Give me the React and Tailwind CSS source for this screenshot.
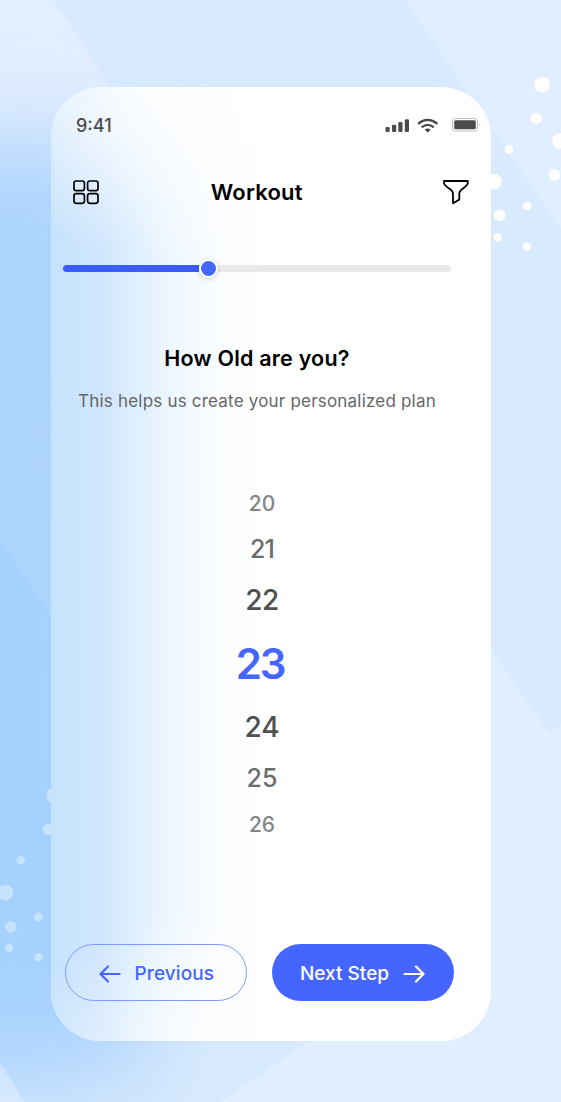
const numbers = [
  { n: 20, box: "h-[42px]", cls: "text-[21px] text-[#858585] font-medium" },
  { n: 21, box: "h-[50px]", cls: "text-[25px] text-[#6c6c6c] font-medium tracking-[-0.04em]" },
  { n: 22, box: "h-[51px]", cls: "text-[28px] text-[#505050] font-medium tracking-[-0.02em]" },
  { n: 23, box: "h-[77px]", cls: "mr-[4px] text-[42px] text-[#4466ff] font-semibold tracking-[-0.05em]" },
  { n: 24, box: "h-[49px]", cls: "text-[28px] text-[#505050] font-medium" },
  { n: 25, box: "h-[54px]", cls: "text-[25px] text-[#6c6c6c] font-medium" },
  { n: 26, box: "h-[38px]", cls: "text-[21px] text-[#858585] font-medium" },
];

const whiteDots = [
  [542, 84.5, 7.8], [536.5, 118.5, 5.7], [560, 141, 7.8], [509, 149.5, 4.3], [554.5, 175, 5.7],
  [494, 181.5, 7.8], [527, 206, 4.3], [499.5, 215.5, 5.7], [497.5, 237.3, 4.3], [527, 246.5, 4.3],
];
const blueDots = [
  [54, 795.5, 7.8], [48.5, 829.5, 5.7], [20.7, 860.3, 4.3], [5.5, 892.5, 7.8],
  [38.5, 917, 4.3], [11, 926.7, 5.7], [9, 948, 4.3], [38.5, 957.3, 4.3],
];

function Backdrop() {
  return (
    <svg className="absolute inset-0" width="561" height="1102" viewBox="0 0 561 1102">
      <defs>
        <filter id="soft" x="-100%" y="-30%" width="300%" height="160%" colorInterpolationFilters="sRGB">
          <feGaussianBlur stdDeviation="44" />
        </filter>
        <linearGradient id="lower" gradientUnits="userSpaceOnUse" x1="0" y1="960" x2="0" y2="1040">
          <stop offset="0" stopColor="#a2d0fe" stopOpacity=".75" />
          <stop offset="1" stopColor="#a2d0fe" stopOpacity="0" />
        </linearGradient>
      </defs>
      <rect width="561" height="1102" fill="#d8eafe" />
      <path d="M405 0H561V230Z" fill="#e1eeff" />
      <path d="M450 590L549 733L561 725V1102H220L450 946Z" fill="#e1eeff" />
      <path d="M0 0H53L111 87L180 190H0Z" fill="#e3eefe" />
      <path d="M-180 140H120L150 1075H-180Z" fill="#add4fd" filter="url(#soft)" />
      <rect x="-180" y="960" width="260" height="130" fill="#a9d3fd" opacity=".5" filter="url(#soft)" />
      <path d="M0 1063L25 1102H0Z" fill="#f0f4ff" opacity=".4" />
      <path d="M0 540L50 615L100 690V1040H0Z" fill="url(#lower)" />
      {blueDots.map(([x, y, r]) => <circle key={y} cx={x} cy={y} r={r} fill="#c6e2fd" />)}
      {whiteDots.map(([x, y, r]) => <circle key={y} cx={x} cy={y} r={r} fill="#fff" />)}
    </svg>
  );
}

function CardGlow() {
  return (
    <svg className="absolute inset-0" width="441" height="954" viewBox="0 0 441 954">
      <defs>
        <linearGradient id="glow">
          <stop offset="0" stopColor="#c5e3fc" />
          <stop offset=".22" stopColor="#cfe5fd" />
          <stop offset=".38" stopColor="#dceefe" />
          <stop offset=".55" stopColor="#edf6ff" />
          <stop offset=".75" stopColor="#f9fcff" />
          <stop offset="1" stopColor="#fff" />
        </linearGradient>
        <radialGradient id="topFade" gradientUnits="userSpaceOnUse" cx="0" cy="0" r="1" gradientTransform="translate(110 -10) scale(220 180)">
          <stop offset="0" stopColor="#fff" stopOpacity=".95" />
          <stop offset=".4" stopColor="#fff" stopOpacity=".65" />
          <stop offset="1" stopColor="#fff" stopOpacity="0" />
        </radialGradient>
        <radialGradient id="bottomFade" gradientUnits="userSpaceOnUse" cx="0" cy="0" r="1" gradientTransform="translate(150 990) scale(190 170)">
          <stop offset="0" stopColor="#fff" stopOpacity=".75" />
          <stop offset=".45" stopColor="#fff" stopOpacity=".4" />
          <stop offset="1" stopColor="#fff" stopOpacity="0" />
        </radialGradient>
      </defs>
      <rect width="212" height="954" fill="url(#glow)" />
      <rect width="441" height="220" fill="url(#topFade)" />
      <rect y="780" width="441" height="174" fill="url(#bottomFade)" />
    </svg>
  );
}

function StatusBar() {
  return (
    <div className="flex h-[74px] items-center justify-between pl-[25.5px] pr-[10px] pt-[2px]">
      <span className="text-[18px] font-medium text-[#4b4b4b]">9:41</span>
      <svg width="98" height="18" viewBox="383 116 98 18" fill="#4b4b4b">
        <rect x="385.5" y="127" width="4.2" height="5" rx="1.2" />
        <rect x="392" y="124.7" width="4.2" height="7.3" rx="1.2" />
        <rect x="398.3" y="122" width="4.2" height="10" rx="1.2" />
        <rect x="404.8" y="119.2" width="4.2" height="12.8" rx="1.2" />
        <g fill="none" stroke="#4b4b4b" strokeWidth="2.2">
          <path d="M418 123.8Q427.7 116 437.4 123.8" />
          <path d="M421.6 127.3Q427.7 122.5 433.8 127.3" />
        </g>
        <path d="M424.7 129.7Q427.7 127.3 430.7 129.7L427.7 132.4Z" />
        <rect x="452.5" y="118.5" width="25" height="12.5" rx="3" fill="none" stroke="#bdbdbd" />
        <rect x="454.2" y="120.2" width="21.6" height="9" rx="1.5" />
        <path d="M479 122.8Q480.8 124.7 479 126.6Z" fill="#b5b5b5" />
      </svg>
    </div>
  );
}

function Header() {
  return (
    <header className="flex h-[62px] items-center justify-between pl-[21px] pr-[21px]">
      <svg width="28" height="28" viewBox="72 178 28 28" fill="none" stroke="#000" strokeWidth="1.7">
        <rect x="74" y="181" width="10.4" height="9.6" rx="2.2" />
        <rect x="87.6" y="181" width="10.4" height="9.6" rx="2.2" />
        <rect x="74" y="193.7" width="10.4" height="9.6" rx="2.2" />
        <rect x="87.6" y="193.7" width="10.4" height="9.6" rx="2.2" />
      </svg>
      <h1 className="mr-[28px] text-[22px] font-semibold tracking-[0.01em] text-black">Workout</h1>
      <svg width="28" height="28" viewBox="442 178 28 28" fill="none" stroke="#000" strokeWidth="1.8" strokeLinejoin="round">
        <path d="M444 181H467.8V182.8C467.8 187.5 459.3 188.4 459.3 193.4V199.6L453 203.2V193.4C453 188.4 444 187.5 444 182.8Z" />
      </svg>
    </header>
  );
}

export default function App() {
  return (
    <div className="relative h-[1102px] w-[561px] overflow-hidden font-['Inter',sans-serif]">
      <Backdrop />
      <main className="relative ml-[50.5px] mt-[87.3px] h-[954px] w-[440.5px] overflow-hidden rounded-[50px] bg-white">
        <CardGlow />
        <div className="relative flex h-full flex-col">
          <StatusBar />
          <Header />
          <div className="ml-[12px] mt-[41.5px] flex h-[7px] w-[388px] items-center rounded-full bg-[#eaeaea]">
            <div className="h-[7px] w-[136px] shrink-0 rounded-l-full bg-[#3b5cff]" />
            <div className="h-[19px] w-[19px] shrink-0 rounded-full border-[2.5px] border-white bg-[#4466ff] shadow-[0_1px_5px_rgba(0,0,0,0.18)]" />
          </div>
          <section className="mt-[69px] flex w-[413px] flex-col items-center">
            <h2 className="flex h-[34px] items-center whitespace-nowrap text-[21.5px] font-semibold tracking-[0.01em] text-black">How Old are you?</h2>
            <p className="mt-[14px] flex h-[26px] items-center whitespace-nowrap text-[17px] tracking-[0.2px] text-[#666]">This helps us create your personalized plan</p>
          </section>
          <div className="ml-[1px] mt-[68px] flex w-[421px] flex-col items-center">
            {numbers.map(({ n, box, cls }) => (
              <div key={n} className={`flex items-center leading-none ${box} ${cls}`}>{n}</div>
            ))}
          </div>
          <div className="ml-[14.5px] mt-[100px] flex gap-[25px]">
            <button className="flex h-[57px] w-[182px] items-center rounded-full border-[1.3px] border-[#8099ff] pl-[32.5px] pt-[3px] text-[19px] font-medium text-[#4466ff]">
              <svg width="22" height="18" viewBox="0 0 22 18" fill="none" stroke="currentColor" strokeWidth="2.2" strokeLinecap="round" strokeLinejoin="round">
                <path d="M20.5 9H1.5M9 1.5L1.5 9L9 16.5" />
              </svg>
              <span className="ml-[14px] tracking-[0.1px]">Previous</span>
            </button>
            <button className="flex h-[57px] w-[182px] items-center rounded-full bg-[#4466ff] pl-[28px] pt-[3px] text-[19px] font-medium text-white">
              <span className="whitespace-nowrap">Next Step</span>
              <svg className="ml-[14px]" width="22" height="18" viewBox="0 0 22 18" fill="none" stroke="currentColor" strokeWidth="2.2" strokeLinecap="round" strokeLinejoin="round">
                <path d="M1.5 9H20.5M13 1.5L20.5 9L13 16.5" />
              </svg>
            </button>
          </div>
        </div>
      </main>
    </div>
  );
}
